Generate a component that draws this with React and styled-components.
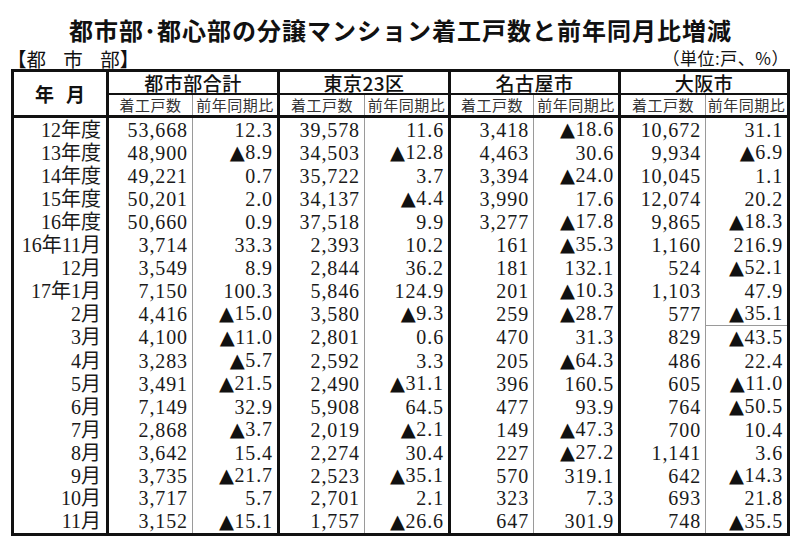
import React from 'react'
import styled, { createGlobalStyle } from 'styled-components'

const GlobalStyle = createGlobalStyle`
  html, body {
    margin: 0;
    padding: 0;
    background: #fff;
  }
  body {
    font-family: "Noto Sans CJK JP", sans-serif;
    color: #111;
  }
`

const Page = styled.div`
  width: 800px;
  height: 551px;
  padding: 0 10px 0 11px;
  box-sizing: border-box;
  overflow: hidden;
`

const Title = styled.h1`
  margin: 0;
  padding-top: 17px;
  height: 44px;
  box-sizing: border-box;
  text-align: center;
  font-family: "Noto Sans CJK JP", sans-serif;
  font-weight: 700;
  font-size: 24px;
  line-height: 26px;
  letter-spacing: 1px;
  color: #111;
`

const SubBar = styled.div`
  display: flex;
  justify-content: space-between;
  align-items: center;
  height: 25px;
`

const Section = styled.span`
  font-family: "Noto Sans CJK JP", sans-serif;
  font-size: 19.5px;
  line-height: 20px;
  margin: 4px 0 0 -4px;
  word-spacing: 13px;
`

const Unit = styled.span`
  font-family: "Noto Sans CJK JP", sans-serif;
  font-size: 17px;
  line-height: 20px;
  letter-spacing: 0.5px;
  margin: 2px 1px 0 0;
`

const Table = styled.table`
  border-collapse: collapse;
  table-layout: fixed;
  width: 776px;
  border: 3px solid #111;
`

const YearHead = styled.th`
  border: 3px solid #111;
  font-family: "Noto Sans CJK JP", sans-serif;
  font-weight: 700;
  font-size: 19px;
  letter-spacing: 12px;
  padding: 0 0 0 12px;
  text-align: center;
`

const GroupHead = styled.th`
  border: 3px solid #111;
  border-bottom-width: 2px;
  height: 21px;
  padding: 0;
  font-family: "Noto Sans CJK JP", sans-serif;
  font-weight: 500;
  font-size: 19px;
  line-height: 21px;
  text-align: center;
  letter-spacing: 0.5px;
`

const SubHead = styled.th`
  height: 20px;
  padding: 0;
  border-bottom: 3px solid #111;
  border-left: ${p => (p.$lead ? '3px solid #111' : '1px solid #9a9a9a')};
  font-family: "Noto Sans CJK JP", sans-serif;
  font-weight: 400;
  font-size: 15px;
  line-height: 20px;
  letter-spacing: 0.5px;
  color: #333;
  text-align: center;
`

const Cell = styled.td`
  height: 22.8px;
  padding: 0 ${p => (p.$label ? '5px' : '4px')} 0 0;
  border-left: ${p => (p.$lead ? '3px solid #111' : '1px solid #9a9a9a')};
  border-bottom: ${p => (p.$rule ? '1px solid #9a9a9a' : 'none')};
  font-family: "Liberation Serif", "Noto Sans CJK JP", serif;
  font-size: 20px;
  line-height: 22px;
  letter-spacing: ${p => (p.$label ? '0' : '0.9px')};
  text-align: right;
  white-space: nowrap;
  color: #1a1a1a;
`

const Minus = styled.span`
  font-family: "DejaVu Sans", sans-serif;
  font-size: 19.5px;
  letter-spacing: 0.5px;
  color: #111;
`

const groups = ['都市部合計', '東京23区', '名古屋市', '大阪市']
const widths = [95, 85, 86, 86, 85, 84, 86, 86, 83]

const rows = [
  ['12年度', '53,668', '12.3', '39,578', '11.6', '3,418', '▲18.6', '10,672', '31.1'],
  ['13年度', '48,900', '▲8.9', '34,503', '▲12.8', '4,463', '30.6', '9,934', '▲6.9'],
  ['14年度', '49,221', '0.7', '35,722', '3.7', '3,394', '▲24.0', '10,045', '1.1'],
  ['15年度', '50,201', '2.0', '34,137', '▲4.4', '3,990', '17.6', '12,074', '20.2'],
  ['16年度', '50,660', '0.9', '37,518', '9.9', '3,277', '▲17.8', '9,865', '▲18.3'],
  ['16年11月', '3,714', '33.3', '2,393', '10.2', '161', '▲35.3', '1,160', '216.9'],
  ['12月', '3,549', '8.9', '2,844', '36.2', '181', '132.1', '524', '▲52.1'],
  ['17年1月', '7,150', '100.3', '5,846', '124.9', '201', '▲10.3', '1,103', '47.9'],
  ['2月', '4,416', '▲15.0', '3,580', '▲9.3', '259', '▲28.7', '577', '▲35.1'],
  ['3月', '4,100', '▲11.0', '2,801', '0.6', '470', '31.3', '829', '▲43.5'],
  ['4月', '3,283', '▲5.7', '2,592', '3.3', '205', '▲64.3', '486', '22.4'],
  ['5月', '3,491', '▲21.5', '2,490', '▲31.1', '396', '160.5', '605', '▲11.0'],
  ['6月', '7,149', '32.9', '5,908', '64.5', '477', '93.9', '764', '▲50.5'],
  ['7月', '2,868', '▲3.7', '2,019', '▲2.1', '149', '▲47.3', '700', '10.4'],
  ['8月', '3,642', '15.4', '2,274', '30.4', '227', '▲27.2', '1,141', '3.6'],
  ['9月', '3,735', '▲21.7', '2,523', '▲35.1', '570', '319.1', '642', '▲14.3'],
  ['10月', '3,717', '5.7', '2,701', '2.1', '323', '7.3', '693', '21.8'],
  ['11月', '3,152', '▲15.1', '1,757', '▲26.6', '647', '301.9', '748', '▲35.5'],
]

// negative values are written with a leading ▲ in the source sheet
const renderValue = v =>
  v.startsWith('▲') ? (
    <>
      <Minus>▲</Minus>
      {v.slice(1)}
    </>
  ) : (
    v
  )

const App = () => {
  return (
    <Page>
      <GlobalStyle />
      <Title>都市部･都心部の分譲マンション着工戸数と前年同月比増減</Title>
      <SubBar>
        <Section>【都 市 部】</Section>
        <Unit>（単位:戸、%）</Unit>
      </SubBar>
      <Table>
        <colgroup>
          {widths.map((w, i) => <col key={i} style={{ width: w }} />)}
        </colgroup>
        <thead>
          <tr>
            <YearHead rowSpan={2}>年月</YearHead>
            {groups.map(g => <GroupHead key={g} colSpan={2}>{g}</GroupHead>)}
          </tr>
          <tr>
            {groups.map(g => (
              <React.Fragment key={g}>
                <SubHead $lead>着工戸数</SubHead>
                <SubHead>前年同期比</SubHead>
              </React.Fragment>
            ))}
          </tr>
        </thead>
        <tbody>
          {rows.map((r, ri) => (
            <tr key={ri}>
              {r.map((v, ci) => (
                <Cell
                  key={ci}
                  $label={ci === 0}
                  $lead={ci % 2 === 1 || ci === 0}
                  // stray rule under 2月 in the Osaka ratio column
                  $rule={ri === 8 && ci === 8}
                >
                  {renderValue(v)}
                </Cell>
              ))}
            </tr>
          ))}
        </tbody>
      </Table>
    </Page>
  )
}

export default App
